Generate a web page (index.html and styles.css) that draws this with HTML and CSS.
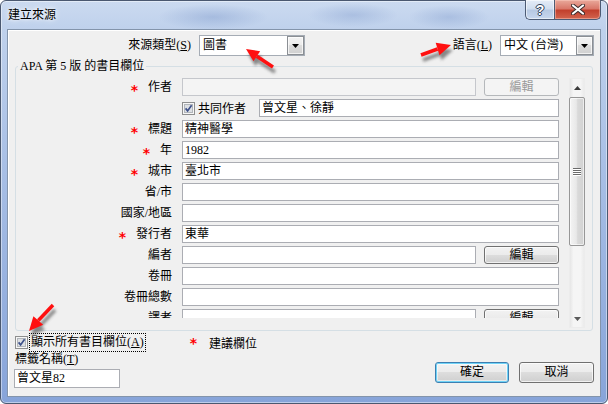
FILE: index.html
```html
<!DOCTYPE html>
<html lang="zh-Hant">
<head>
<meta charset="utf-8">
<title>建立來源</title>
<link rel="stylesheet" href="styles.css">
</head>
<body>
<div class="window">
  <div class="titlebar">
    <span class="title">建立來源</span>
    <div class="caps">
      <span class="cap help">?</span>
      <span class="cap close"><svg width="14" height="11" viewBox="0 0 14 11"><path d="M2 1.5 L12 9.5 M12 1.5 L2 9.5" stroke="#3a2a2a" stroke-width="4" stroke-linecap="round"/><path d="M2 1.5 L12 9.5 M12 1.5 L2 9.5" stroke="#fff" stroke-width="2.2" stroke-linecap="round"/></svg></span>
    </div>
  </div>
  <div class="client">
    <div class="toprow">
      <span class="tlabel srclabel">來源類型(<u>S</u>)</span>
      <div class="combo srccombo"><span class="ctext">圖書</span><span class="cbtn"><svg width="7" height="4" viewBox="0 0 7 4"><path d="M0 0 H7 L3.5 4 Z" fill="#000"/></svg></span></div>
      <span class="tlabel langlabel">語言(<u>L</u>)</span>
      <div class="combo langcombo"><span class="ctext">中文 (台灣)</span><span class="cbtn"><svg width="7" height="4" viewBox="0 0 7 4"><path d="M0 0 H7 L3.5 4 Z" fill="#000"/></svg></span></div>
    </div>
    <fieldset class="group">
      <legend>APA 第 5 版 的書目欄位</legend>
      <div class="gbody">
        <div class="pane">
          <div class="lbl"><span class="req">*</span>作者</div>
          <div class="cell"><span class="field dis"></span><span class="btn dis">編輯</span></div>

          <div class="lbl"></div>
          <div class="cell co"><span class="cb"><svg width="13" height="13" viewBox="0 0 13 13"><rect x="0.5" y="0.5" width="12" height="12" fill="#f6f6f6" stroke="#8e8f8f"/><rect x="2.5" y="2.5" width="8" height="8" fill="#dde0e4" stroke="#b2b6bb"/><path d="M3.6 6.4 L5.6 8.9 L9.6 3.2" fill="none" stroke="#3d5089" stroke-width="1.7"/></svg></span><span class="colbl">共同作者</span><span class="field cofield">曾文星、徐靜</span></div>

          <div class="lbl"><span class="req">*</span>標題</div>
          <div class="cell"><span class="field">精神醫學</span></div>

          <div class="lbl"><span class="req">*</span>年</div>
          <div class="cell"><span class="field">1982</span></div>

          <div class="lbl"><span class="req">*</span>城市</div>
          <div class="cell"><span class="field">臺北市</span></div>

          <div class="lbl">省/市</div>
          <div class="cell"><span class="field"></span></div>

          <div class="lbl">國家/地區</div>
          <div class="cell"><span class="field"></span></div>

          <div class="lbl"><span class="req">*</span>發行者</div>
          <div class="cell"><span class="field">東華</span></div>

          <div class="lbl">編者</div>
          <div class="cell"><span class="field"></span><span class="btn">編輯</span></div>

          <div class="lbl">卷冊</div>
          <div class="cell"><span class="field"></span></div>

          <div class="lbl">卷冊總數</div>
          <div class="cell"><span class="field"></span></div>

          <div class="lbl">譯者</div>
          <div class="cell"><span class="field"></span><span class="btn">編輯</span></div>
        </div>
        <div class="vscroll">
          <div class="sbtn"><svg width="7" height="4" viewBox="0 0 7 4"><path d="M0 4 H7 L3.5 0 Z" fill="#3c3c3c"/></svg></div>
          <div class="track">
            <div class="thumb"><svg width="8" height="8" viewBox="0 0 8 8"><path d="M0 0.5 H8 M0 2.5 H8 M0 4.5 H8 M0 6.5 H8" stroke="#6a6a6a"/><path d="M0 1.5 H8 M0 3.5 H8 M0 5.5 H8 M0 7.5 H8" stroke="#ffffff"/></svg></div>
          </div>
          <div class="sbtn"><svg width="7" height="4" viewBox="0 0 7 4"><path d="M0 0 H7 L3.5 4 Z" fill="#5a5a5a"/></svg></div>
        </div>
      </div>
    </fieldset>
    <div class="bottom">
      <div class="leftcol">
        <div class="showrow">
          <span class="cb cbmain"><svg width="13" height="13" viewBox="0 0 13 13"><rect x="0.5" y="0.5" width="12" height="12" fill="#f6f6f6" stroke="#8e8f8f"/><rect x="2.5" y="2.5" width="8" height="8" fill="#dde0e4" stroke="#b2b6bb"/><path d="M3.6 6.4 L5.6 8.9 L9.6 3.2" fill="none" stroke="#3d5089" stroke-width="1.7"/></svg></span>
          <span class="focus">顯示所有書目欄位(<u>A</u>)</span>
          <span class="req note">*</span><span class="notetext">建議欄位</span>
        </div>
        <div class="taglbl">標籤名稱(<u>T</u>)</div>
        <span class="field tagfield">曾文星82</span>
      </div>
      <div class="buttons">
        <span class="btn big ok">確定</span>
        <span class="btn big cancel">取消</span>
      </div>
    </div>
  </div>
</div>
<svg class="arrows" width="608" height="404" viewBox="0 0 608 404">
  <defs>
    <filter id="blur" x="-50%" y="-50%" width="200%" height="200%"><feGaussianBlur stdDeviation="1.8"/></filter>
  </defs>
  <g class="shadow" transform="translate(2,5)" filter="url(#blur)" fill="#404040" stroke="#404040" opacity="0.6">
    <line x1="273" y1="67" x2="256.8" y2="56.2" stroke-width="3.5"/>
    <polygon points="246,49 260.1,51.2 253.5,61.2" stroke="none"/>
    <line x1="421" y1="55" x2="437.6" y2="49" stroke-width="3.5"/>
    <polygon points="451,45 439.5,55.2 435.7,42.8" stroke="none"/>
    <line x1="53" y1="305" x2="38.3" y2="320.5" stroke-width="3.5"/>
    <polygon points="29,331 43.2,324.8 33.4,316.2" stroke="none"/>
  </g>
  <g fill="#ff1010" stroke="#ff1010">
    <line x1="273" y1="67" x2="256.8" y2="56.2" stroke-width="3.5"/>
    <polygon points="246,49 260.1,51.2 253.5,61.2" stroke="none"/>
    <line x1="421" y1="55" x2="437.6" y2="49" stroke-width="3.5"/>
    <polygon points="451,45 439.5,55.2 435.7,42.8" stroke="none"/>
    <line x1="53" y1="305" x2="38.3" y2="320.5" stroke-width="3.5"/>
    <polygon points="29,331 43.2,324.8 33.4,316.2" stroke="none"/>
  </g>
</svg>
</body>
</html>
```
FILE: styles.css
```css
* { box-sizing: border-box; }
html, body { margin: 0; padding: 0; }
body {
  width: 608px;
  height: 404px;
  overflow: hidden;
  position: relative;
  background: #ffffff;
  font-family: "Liberation Serif", "Noto Sans CJK TC", serif;
  font-size: 12px;
  color: #000;
}
u { text-decoration: underline; text-underline-offset: 1px; }

.window {
  width: 608px;
  height: 404px;
  border: 1px solid #4a5870;
  border-radius: 6px;
  display: flex;
  flex-direction: column;
  background:
    radial-gradient(ellipse 55px 13px at 212px 16px, rgba(110,140,195,0.35), rgba(110,140,195,0)),
    radial-gradient(ellipse 45px 12px at 352px 14px, rgba(110,140,195,0.30), rgba(110,140,195,0)),
    radial-gradient(ellipse 40px 12px at 448px 16px, rgba(110,140,195,0.30), rgba(110,140,195,0)),
    linear-gradient(180deg, #cbdaf0 0px, #bfd1ec 28px, #a9c0e6 160px, #87a4d9 100%);
  box-shadow: inset 0 0 0 1px rgba(255,255,255,0.45);
}

.titlebar {
  height: 28px;
  display: flex;
  align-items: flex-start;
  padding-left: 7px;
}
.title {
  font-family: "Noto Sans CJK TC", sans-serif;
  font-size: 12px;
  line-height: 16px;
  padding-top: 5px;
  color: #000;
  text-shadow: 0 0 6px #ffffff, 0 0 3px rgba(255,255,255,0.9);
}
.caps {
  margin-left: auto;
  margin-right: 6px;
  margin-top: -1px;
  display: flex;
  height: 20px;
}
.cap {
  height: 20px;
  display: flex;
  align-items: center;
  justify-content: center;
  border: 1px solid #4c5b74;
  border-top: none;
}
.help {
  width: 29px;
  border-right: none;
  border-bottom-left-radius: 5px;
  background: linear-gradient(180deg, #e4ecf7 0%, #d1deef 45%, #b7c9e3 55%, #c7d7ee 100%);
  box-shadow: inset 0 0 0 1px rgba(255,255,255,0.55);
  font-family: "Liberation Sans", sans-serif;
  font-weight: bold;
  font-size: 14px;
  color: #ffffff;
  text-shadow: 0 0 1px #34445e, 1px 0 0 #34445e, -1px 0 0 #34445e, 0 1px 0 #34445e, 0 -1px 0 #34445e;
}
.close {
  width: 47px;
  border-bottom-right-radius: 5px;
  background: linear-gradient(180deg, #e9a99b 0%, #d9786a 45%, #c2402d 55%, #d2644e 100%);
  box-shadow: inset 0 0 0 1px rgba(255,210,200,0.45);
}

.client {
  height: 368px;
  margin: 0 6px 6px 6px;
  border: 1px solid #8394ab;
  background: #f0f0f0;
  box-shadow: inset 1px 1px 0 #ffffff;
  display: flex;
  flex-direction: column;
}

.toprow {
  display: flex;
  height: 21px;
  margin-top: 5px;
  padding-right: 6px;
  align-items: center;
}
.tlabel {
  font-size: 12px;
  line-height: 21px;
  white-space: nowrap;
}
.srclabel { width: 183px; text-align: right; margin-right: 8px; }
.langlabel { margin-left: auto; margin-right: 8px; }
.combo {
  display: flex;
  height: 21px;
  border: 1px solid #a5acb5;
  background: #ffffff;
}
.srccombo { width: 106px; }
.langcombo { width: 94px; }
.ctext {
  flex: 1;
  padding-left: 3px;
  line-height: 19px;
  white-space: nowrap;
  overflow: hidden;
}
.cbtn {
  width: 17px;
  display: flex;
  align-items: center;
  justify-content: center;
  border: 1px solid #8b8f94;
  background: linear-gradient(180deg, #f3f3f3 0%, #ebebeb 50%, #dcdcdc 50%, #d0d0d0 100%);
  box-shadow: inset 0 0 0 1px rgba(255,255,255,0.7);
}

.group {
  margin: 3px 7px 0 7px;
  padding: 5px 7px 2px 0;
  border: 1px solid #d5dfe5;
  border-radius: 3px;
  min-width: 0;
}
.group legend {
  margin-left: 2px;
  padding: 0 2px;
  font-size: 12px;
  line-height: 14px;
  white-space: nowrap;
}
.gbody {
  display: flex;
  height: 250px;
  align-items: flex-start;
}
.pane {
  width: 553px;
  height: 240px;
  overflow: hidden;
  display: grid;
  grid-template-columns: 156px 377px;
  grid-auto-rows: 18px;
  column-gap: 10px;
  row-gap: 3px;
}
.lbl {
  text-align: right;
  line-height: 18px;
  white-space: nowrap;
}
.req {
  display: inline-block;
  color: #ff0000;
  font-family: "DejaVu Sans", sans-serif;
  font-weight: bold;
  font-size: 14px;
  line-height: 10px;
  vertical-align: -4px;
  margin-right: 10px;
}
.cell {
  display: flex;
  align-items: center;
  gap: 8px;
}
.cell.co { gap: 0; }
.field {
  display: block;
  flex: 1;
  height: 18px;
  border: 1px solid #abadb3;
  background: #ffffff;
  padding: 0 2px;
  line-height: 16px;
  white-space: nowrap;
  overflow: hidden;
}
.field.dis {
  background: #f4f4f4;
  border-color: #c5c7cc;
}
.btn {
  display: flex;
  align-items: center;
  justify-content: center;
  width: 75px;
  height: 18px;
  flex: none;
  border: 1px solid #707070;
  border-radius: 3px;
  background: linear-gradient(180deg, #f2f2f2 0%, #ebebeb 50%, #dddddd 50%, #cfcfcf 100%);
  box-shadow: inset 0 0 0 1px rgba(255,255,255,0.7);
  line-height: 16px;
}
.btn.dis {
  border-color: #b5b8bb;
  background: #f4f4f4;
  color: #9a9a9a;
  box-shadow: none;
}
.cb {
  display: block;
  width: 13px;
  height: 13px;
  flex: none;
}
.cb svg { display: block; }
.colbl {
  margin-left: 3px;
  white-space: nowrap;
}
.cofield {
  flex: none;
  width: 300px;
  margin-left: auto;
}

.vscroll {
  width: 16px;
  height: 250px;
  margin-left: 0;
  display: flex;
  flex-direction: column;
  background: linear-gradient(90deg, #e6e6e6 0%, #f5f5f5 25%, #f5f5f5 75%, #ebebeb 100%);
  border: 1px solid #ececec;
}
.sbtn {
  height: 17px;
  display: flex;
  align-items: center;
  justify-content: center;
  flex: none;
}
.track {
  flex: 1;
  padding-top: 1px;
}
.thumb {
  height: 149px;
  margin: 0 -1px;
  border: 1px solid #979797;
  border-radius: 2px;
  background: linear-gradient(90deg, #f4f4f4 0%, #e8e8e8 45%, #d9d9d9 55%, #d2d2d2 100%);
  box-shadow: inset 0 0 0 1px rgba(255,255,255,0.6);
  display: flex;
  align-items: center;
  justify-content: center;
}
.thumb svg { display: block; }

.bottom {
  display: flex;
  margin-top: 2px;
  padding: 0 6px;
}
.leftcol {
  display: flex;
  flex-direction: column;
  align-items: flex-start;
}
.showrow {
  display: flex;
  align-items: center;
  height: 19px;
}
.cbmain { margin-left: 1px; }
.focus {
  margin-left: 1px;
  border: 1px dotted #000000;
  padding: 0 1px;
  line-height: 17px;
  white-space: nowrap;
}
.note { margin-left: 44px; margin-right: 12px; vertical-align: baseline; }
.notetext { white-space: nowrap; }
.taglbl {
  margin-left: 1px;
  line-height: 14px;
  white-space: nowrap;
}
.tagfield {
  flex: none;
  width: 106px;
  height: 19px;
  margin-top: 3px;
  line-height: 17px;
}
.buttons {
  margin-left: auto;
  display: flex;
  gap: 10px;
  padding-top: 29px;
  align-items: flex-start;
}
.btn.big {
  height: 21px;
  line-height: 19px;
}
.ok {
  width: 74px;
  border-color: #3c7fb1;
  box-shadow: inset 0 0 0 1px #6fd3f7, inset 0 0 0 2px rgba(255,255,255,0.5);
}
.cancel { width: 75px; }

.arrows {
  position: absolute;
  left: 0;
  top: 0;
  pointer-events: none;
}
```
